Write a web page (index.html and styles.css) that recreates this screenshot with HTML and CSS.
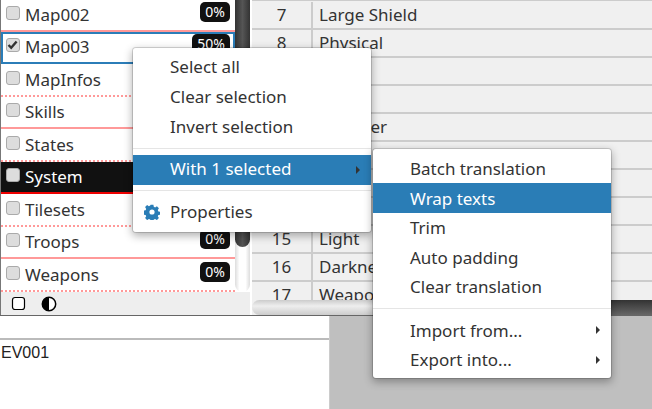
FILE: index.html
```html
<!DOCTYPE html>
<html lang="en">
<head>
<meta charset="utf-8">
<title>Translator</title>
<link rel="stylesheet" href="styles.css">
</head>
<body>
<div class="app">
  <div class="top">
    <aside class="side">
      <div class="side-main">
        <ul class="files">
          <li class="file"><span class="check"></span><span class="name">Map002</span><span class="pct">0%</span></li>
          <li class="file focus"><span class="check checked"><svg viewBox="0 0 13 13" width="13" height="13"><path d="M2.5 7 L5.2 9.8 L10.6 3.4" fill="none" stroke="#333" stroke-width="2.4"/></svg></span><span class="name">Map003</span><span class="pct">50%</span></li>
          <li class="file dotted"><span class="check"></span><span class="name">MapInfos</span><span class="pct">0%</span></li>
          <li class="file"><span class="check"></span><span class="name">Skills</span><span class="pct">0%</span></li>
          <li class="file dotted"><span class="check"></span><span class="name">States</span><span class="pct">0%</span></li>
          <li class="file current"><span class="check"></span><span class="name">System</span><span class="pct">0%</span></li>
          <li class="file dotted"><span class="check"></span><span class="name">Tilesets</span><span class="pct">0%</span></li>
          <li class="file"><span class="check"></span><span class="name">Troops</span><span class="pct">0%</span></li>
          <li class="file dotted"><span class="check"></span><span class="name">Weapons</span><span class="pct">0%</span></li>
        </ul>
        <div class="vbar"><div class="vthumb"></div></div>
      </div>
      <div class="tools">
        <svg viewBox="0 0 15 15" width="15" height="15"><rect x="1.5" y="1.5" width="12" height="12" rx="2.5" fill="#fff" stroke="#000" stroke-width="1.2"/></svg>
        <svg viewBox="0 0 16 16" width="16" height="16"><circle cx="8" cy="8" r="6.7" fill="#fff" stroke="#000" stroke-width="1.5"/><path d="M8 1.3 A6.7 6.7 0 0 0 8 14.7 Z" fill="#000"/></svg>
      </div>
    </aside>
    <main class="grid-pane">
      <div class="grid">
        <div class="tr"><span class="num">7</span><span class="txt">Large Shield</span></div>
        <div class="tr"><span class="num">8</span><span class="txt">Physical</span></div>
        <div class="tr"><span class="num">9</span><span class="txt">Fire</span></div>
        <div class="tr"><span class="num">10</span><span class="txt">Ice</span></div>
        <div class="tr"><span class="num">11</span><span class="txt">Thunder</span></div>
        <div class="tr"><span class="num">12</span><span class="txt">Water</span></div>
        <div class="tr"><span class="num">13</span><span class="txt">Earth</span></div>
        <div class="tr"><span class="num">14</span><span class="txt">Wind</span></div>
        <div class="tr"><span class="num">15</span><span class="txt">Light</span></div>
        <div class="tr"><span class="num">16</span><span class="txt">Darkness</span></div>
        <div class="tr"><span class="num">17</span><span class="txt">Weapon</span></div>
      </div>
      <div class="hbar"><div class="hthumb"></div></div>
    </main>
  </div>
  <div class="bottom">
    <div class="editor">
      <div class="context-line"></div>
      <div class="source">EV001</div>
    </div>
    <div class="blank"></div>
  </div>
</div>

<nav class="menu main-menu">
  <div class="item">Select all</div>
  <div class="item">Clear selection</div>
  <div class="item">Invert selection</div>
  <div class="sep"></div>
  <div class="item active sub">With 1 selected<span class="arrow"></span></div>
  <div class="sep"></div>
  <div class="item props"><svg class="gear" viewBox="0 0 16 16" width="16" height="16"><path fill="#2a7db6" fill-rule="evenodd" d="M6.6.8h2.8l.4 2 1.3.6 1.8-1.1 2 2-1.1 1.8.6 1.3 2 .4v2.8l-2 .4-.6 1.3 1.1 1.8-2 2-1.8-1.1-1.3.6-.4 2H6.6l-.4-2-1.3-.6-1.8 1.1-2-2 1.1-1.8-.6-1.3-2-.4V6.6l2-.4.6-1.3-1.1-1.8 2-2 1.8 1.1 1.3-.6zM8 5.4a2.6 2.6 0 1 0 0 5.2 2.6 2.6 0 0 0 0-5.2z"/></svg>Properties</div>
</nav>

<nav class="menu sub-menu">
  <div class="item">Batch translation</div>
  <div class="item active">Wrap texts</div>
  <div class="item">Trim</div>
  <div class="item">Auto padding</div>
  <div class="item">Clear translation</div>
  <div class="sep"></div>
  <div class="item sub">Import from...<span class="arrow"></span></div>
  <div class="item sub">Export into...<span class="arrow"></span></div>
</nav>
</body>
</html>
```
FILE: styles.css
```css
* { box-sizing: border-box; }
html, body { margin: 0; height: 100%; overflow: hidden; }
body { font-family: "Noto Sans", "DejaVu Sans", sans-serif; font-size: 17px; color: #333; background: #fff; }

.app { display: flex; flex-direction: column; height: 409px; }
.top { display: flex; height: 316px; border-bottom: 1px solid #666; flex: none; }

.side { width: 250px; flex: none; display: flex; flex-direction: column; border-left: 1px solid #777; }
.side-main { height: 292px; display: flex; overflow: hidden; flex: none; }
.files { list-style: none; margin: -1px 0 0; padding: 0; width: 234px; flex: none; }
.file { height: 32.5px; display: flex; align-items: center; padding: 1px 5px 0; gap: 5px; border-bottom: 2px solid #f99; background: #fff; }
.file.dotted { border-bottom: 2px dotted #f99; }
.file.focus { outline: 2px solid #2b7db8; outline-offset: -2px; border-bottom: 2px dotted #f99; }
.file.current { background: #111; color: #fff; border-bottom: 2px solid #e00; }
.check { width: 14px; height: 14px; flex: none; border: 1px solid #aaa; border-radius: 3px; background: #ddd; margin-top: -4px; }
.check svg { display: block; margin: -1px 0 0 -1px; }
.name { flex: 1; line-height: 20px; }
.pct { background: #111; color: #fff; font-size: 14px; line-height: 20px; border-radius: 5px; padding: 0 5px; margin: -6px 0 0 0; }

.vbar { width: 15px; flex: none; position: relative; background: linear-gradient(90deg, #ddd, #fff 30%, #fff 70%, #ddd); border-radius: 0 0 8px 8px; }
.vthumb { height: 247px; border-radius: 0 0 8px 8px; background: linear-gradient(90deg, #333, #555 50%, #333); }

.tools { flex: 1; background: #eee; display: flex; align-items: center; gap: 15px; padding: 0 0 0 10px; }

.grid-pane { flex: 1; min-width: 0; margin-left: 2px; display: flex; flex-direction: column; background: #f0f0f0; }
.grid { flex: 1; min-height: 0; overflow: hidden; padding-top: 1px; border-top: 1px solid #ccc; }
.tr { display: flex; height: 28px; border-bottom: 2px solid #ccc; line-height: 26px; }
.num { width: 61px; flex: none; text-align: center; border-right: 2px solid #ccc; }
.txt { padding-left: 6px; white-space: nowrap; }
.hbar { height: 15px; flex: none; background: linear-gradient(#ccc, #eee 40%, #ccc); border-radius: 8px 0 0 8px; position: relative; display: flex; justify-content: flex-end; }
.hthumb { width: 150px; background: linear-gradient(#333, #666); }

.bottom { flex: 1; display: flex; min-height: 0; }
.editor { width: 330px; flex: none; display: flex; flex-direction: column; background: #fff; border-right: 1px solid #ccc; }
.context-line { height: 24px; border-bottom: 2px solid #bbb; flex: none; }
.source { padding-left: 1px; font-family: "Liberation Sans", sans-serif; font-size: 16px; color: #222; line-height: 26px; }
.blank { flex: 1; background: #bfbfbf; }

.menu { position: absolute; width: 240px; background: #fff; border: 1px solid rgba(0,0,0,.15); border-radius: 4px; padding: 5px 0; box-shadow: 0 3px 8px rgba(0,0,0,.3); background-clip: padding-box; }
.main-menu { left: 132px; top: 47px; height: 186px; }
.main-menu .item { height: 30px; line-height: 28px; }
.main-menu .item.props { line-height: 30px; }
.sub-menu { left: 372px; top: 148px; height: 231px; }
.item { position: relative; height: 29.4px; line-height: 29px; padding-left: 37px; color: #333; white-space: nowrap; }
.item.active { background: #2a7db6; color: #fff; height: 30px; }
.sub-menu .item.active { line-height: 31px; }
.sep { height: 1px; background: #e5e5e5; margin: 5px 0 6px; }
.sub-menu .sep { margin: 6px 0 7px; }
.arrow { position: absolute; right: 11px; top: 50%; margin-top: -4px; border-left: 4px solid #333; border-top: 4px solid transparent; border-bottom: 4px solid transparent; }
.gear { position: absolute; left: 11px; top: 7px; }
```
